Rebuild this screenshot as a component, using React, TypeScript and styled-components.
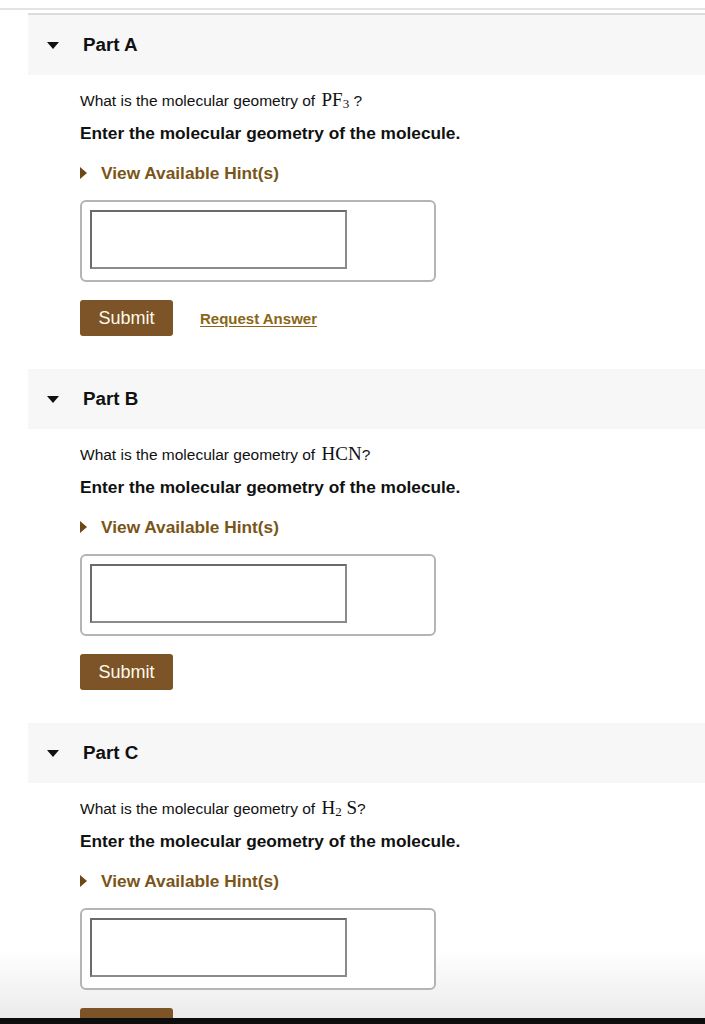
import React from "react";
import styled, { createGlobalStyle } from "styled-components";

const Global = createGlobalStyle`
  html {
    background: linear-gradient(180deg, #ffffff 0px, #ffffff 950px, #ebebeb 1018px, #ebebeb 1024px) fixed no-repeat;
  }
  body {
    margin: 0;
    font-family: "Liberation Sans", Arial, Helvetica, sans-serif;
    color: #1a1a1a;
  }
`;

const Page = styled.div`
  padding-top: 8px;
`;

const TopRule = styled.div`
  height: 2px;
  background: #e3e3e3;
`;

const Parts = styled.div`
  margin-top: 3px;
  margin-left: 28px;
  border-top: 2px solid #dcdcdc;
`;

const Section = styled.section`
  padding-bottom: 33px;
`;

const Header = styled.div`
  height: 60px;
  background: #f7f7f7;
  display: flex;
  align-items: center;
  padding-left: 19px;
  gap: 24px;
`;

const Caret = styled.span`
  width: 0;
  height: 0;
  border-left: 6px solid transparent;
  border-right: 6px solid transparent;
  border-top: 7px solid #111;
`;

const PartTitle = styled.h2`
  margin: 0;
  font-size: 18.8px;
  font-weight: 700;
  color: #111;
  line-height: 20px;
`;

const Body = styled.div`
  padding-left: 52px;
`;

const Question = styled.p`
  margin: 15px 0 0;
  font-size: 15.5px;
  line-height: 20px;
  color: #111;
`;

const Formula = styled.span`
  font-family: "Liberation Serif", "Times New Roman", serif;
  font-size: 19px;
  margin-left: 2px;
`;

const Sub = styled.sub`
  font-size: 13px;
  vertical-align: -2px;
  line-height: 0;
`;

const Instruction = styled.p`
  margin: 12px 0 0;
  font-size: 17.3px;
  font-weight: 700;
  line-height: 20px;
  color: #111;
`;

const HintRow = styled.div`
  margin-top: 20px;
  height: 20px;
  display: flex;
  align-items: center;
  gap: 14px;
`;

const HintCaret = styled.span`
  width: 0;
  height: 0;
  border-top: 6px solid transparent;
  border-bottom: 6px solid transparent;
  border-left: 7px solid #6a4817;
`;

const HintText = styled.span`
  font-size: 17.3px;
  font-weight: 700;
  color: #7a5518;
`;

const AnswerBox = styled.div`
  margin-top: 17px;
  box-sizing: border-box;
  width: 356px;
  height: 82px;
  border: 2px solid #b4b4b4;
  border-radius: 6px;
  background: #fff;
  padding: 8px;
`;

const Input = styled.div`
  box-sizing: border-box;
  width: 257px;
  height: 59px;
  border: 2px solid #8a8a8a;
  border-top-color: #6a6a6a;
  border-left-color: #6a6a6a;
  background: #fff;
`;

const Actions = styled.div`
  margin-top: 18px;
  display: flex;
  align-items: center;
  gap: 27px;
`;

const SubmitButton = styled.button`
  box-sizing: border-box;
  width: 93px;
  height: 36px;
  border: none;
  border-radius: 3px;
  background: #7c5428;
  color: #fffbe8;
  font-family: "Liberation Sans", Arial, sans-serif;
  font-size: 18px;
  padding: 0;
`;

const RequestLink = styled.a`
  font-size: 15px;
  font-weight: 700;
  color: #8a6616;
  text-decoration: underline;
  text-underline-offset: 2px;
`;

const BottomBar = styled.div`
  position: fixed;
  left: 0;
  right: 0;
  bottom: 0;
  height: 6px;
  background: #0d0d0d;
  z-index: 10;
`;

type Part = {
  label: string;
  formula: React.ReactNode;
  request?: boolean;
};

const parts: Part[] = [
  {
    label: "Part A",
    formula: (
      <>
        <Formula>
          PF<Sub>3</Sub>
        </Formula>{" "}
        ?
      </>
    ),
    request: true,
  },
  {
    label: "Part B",
    formula: (
      <>
        <Formula>HCN</Formula>?
      </>
    ),
  },
  {
    label: "Part C",
    formula: (
      <>
        <Formula>
          H<Sub>2</Sub> S
        </Formula>
        ?
      </>
    ),
  },
];

export default function App() {
  return (
    <>
      <Global />
      <Page>
        <TopRule />
        <Parts>
          {parts.map((p) => (
            <Section key={p.label}>
              <Header>
                <Caret />
                <PartTitle>{p.label}</PartTitle>
              </Header>
              <Body>
                <Question>
                  What is the molecular geometry of {p.formula}
                </Question>
                <Instruction>Enter the molecular geometry of the molecule.</Instruction>
                <HintRow>
                  <HintCaret />
                  <HintText>View Available Hint(s)</HintText>
                </HintRow>
                <AnswerBox>
                  <Input />
                </AnswerBox>
                <Actions>
                  <SubmitButton>Submit</SubmitButton>
                  {p.request && <RequestLink href="#">Request Answer</RequestLink>}
                </Actions>
              </Body>
            </Section>
          ))}
        </Parts>
      </Page>
      <BottomBar />
    </>
  );
}
